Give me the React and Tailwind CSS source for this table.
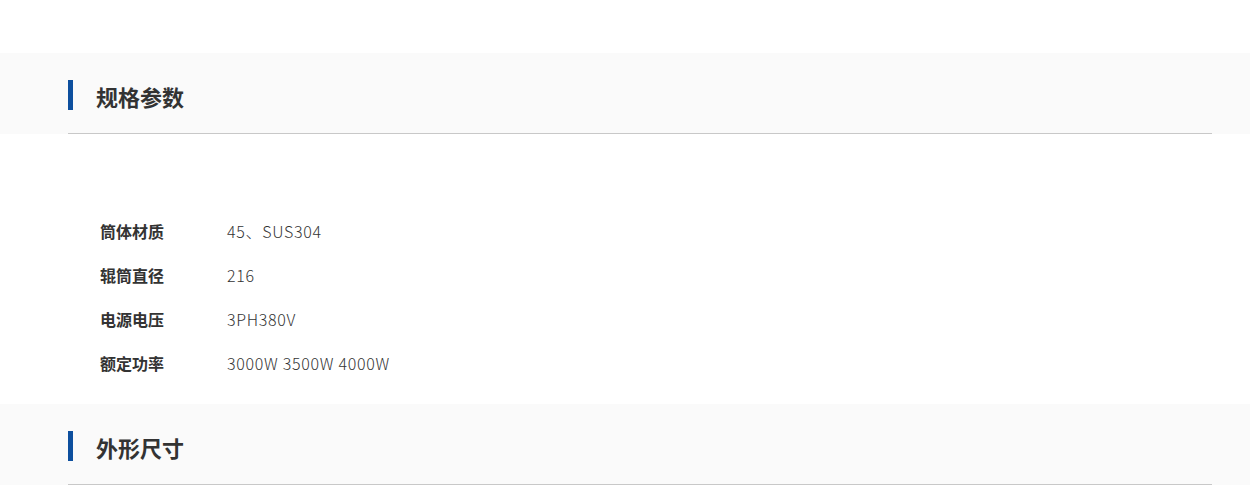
const specs = [
  { label: "筒体材质", value: "45、SUS304" },
  { label: "辊筒直径", value: "216" },
  { label: "电源电压", value: "3PH380V" },
  { label: "额定功率", value: "3000W 3500W 4000W" },
];

const SectionHead = ({ title }) => (
  <div className="bg-[#fafafa]">
    <div className="ml-[68px] w-[1144px] h-[81px] border-b border-[#c8c8c8] flex items-start">
      <span className="w-[5px] h-[30px] mt-[27px] bg-[#0d4f9e]" />
      <h2 className="ml-[23px] mt-[32px] text-[22px] font-bold text-[#333] leading-none">
        {title}
      </h2>
    </div>
  </div>
);

const App = () => {
  return (
    <div
      className="w-[1250px] h-[504px] bg-white overflow-hidden pt-[53px]"
      style={{ fontFamily: '"Noto Sans CJK SC", "Noto Sans", sans-serif' }}
    >
      <SectionHead title="规格参数" />

      {/* spec table */}
      <div className="ml-[100px] pt-[75px] pb-[19px]">
        {specs.map((s) => (
          <div key={s.label} className="flex items-center h-[44px]">
            <span className="w-[127px] text-[16px] font-bold text-[#333]">
              {s.label}
            </span>
            <span className="text-[16px] font-light tracking-[0.7px] text-[#333]">
              {s.value}
            </span>
          </div>
        ))}
      </div>

      <SectionHead title="外形尺寸" />
    </div>
  );
};

export default App;
